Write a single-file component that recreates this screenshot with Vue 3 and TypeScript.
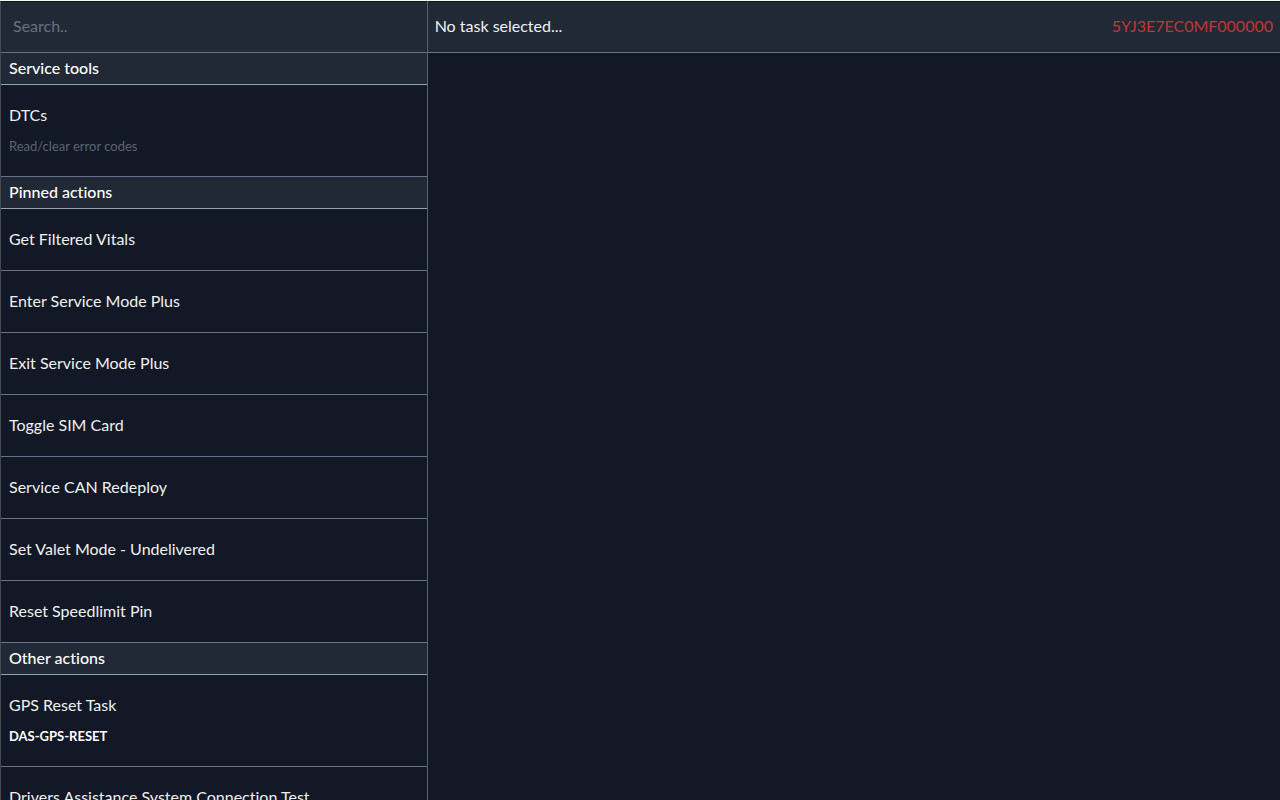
<script setup lang="ts">
import { ref, computed } from 'vue'

interface Task {
  name: string
  detail?: string
  code?: string
}

interface Group {
  title: string
  tasks: Task[]
}

const query = ref('')
const selected = ref<Task | null>(null)
const vin = '5YJ3E7EC0MF000000'

const groups: Group[] = [
  { title: 'Service tools', tasks: [{ name: 'DTCs', detail: 'Read/clear error codes' }] },
  {
    title: 'Pinned actions',
    tasks: [
      { name: 'Get Filtered Vitals' },
      { name: 'Enter Service Mode Plus' },
      { name: 'Exit Service Mode Plus' },
      { name: 'Toggle SIM Card' },
      { name: 'Service CAN Redeploy' },
      { name: 'Set Valet Mode - Undelivered' },
      { name: 'Reset Speedlimit Pin' },
    ],
  },
  {
    title: 'Other actions',
    tasks: [
      { name: 'GPS Reset Task', code: 'DAS-GPS-RESET' },
      { name: 'Drivers Assistance System Connection Test' },
    ],
  },
]

const visibleGroups = computed(() =>
  groups
    .map((g) => ({
      ...g,
      tasks: g.tasks.filter((t) => t.name.toLowerCase().includes(query.value.toLowerCase())),
    }))
    .filter((g) => g.tasks.length > 0),
)
</script>

<template>
  <div class="app">
    <aside class="sidebar">
      <input v-model="query" class="search" type="text" placeholder="Search.." aria-label="Search tasks" />
      <nav class="list">
        <section v-for="group in visibleGroups" :key="group.title">
          <h2 class="group-title">{{ group.title }}</h2>
          <button v-for="task in group.tasks" :key="task.name" class="task" type="button" @click="selected = task">
            <span class="name">{{ task.name }}</span>
            <span v-if="task.detail" class="detail">{{ task.detail }}</span>
            <span v-if="task.code" class="code">{{ task.code }}</span>
          </button>
        </section>
      </nav>
    </aside>
    <main class="panel">
      <header class="bar">
        <span>{{ selected ? selected.name : 'No task selected...' }}</span>
        <span class="vin">{{ vin }}</span>
      </header>
    </main>
  </div>
</template>

<style>
body {
  background: #121826;
}
</style>

<style scoped>
.app {
  display: grid;
  grid-template-columns: 1fr 2fr;
  grid-template-rows: minmax(0, 1fr);
  box-sizing: border-box;
  height: 100vh;
  overflow: hidden;
  border-top: 1px solid #f4f5f5;
  background: #121826;
  color: #f0f0ee;
  font-family: Lato, "Noto Sans", sans-serif;
  font-size: 16px;
  font-variant-ligatures: none;
  line-height: 24px;
}

.sidebar {
  display: flex;
  flex-direction: column;
  min-width: 0;
  min-height: 0;
  border-left: 1px solid #424a54;
}

.search,
.bar {
  flex: none;
  box-sizing: border-box;
  height: 52px;
  border: 0;
  border-top: 1px solid #10151c;
  border-bottom: 1px solid #64728d;
  background: #212936;
}

.search {
  width: 100%;
  padding: 0 12px 3px;
  border-radius: 0;
  outline: none;
  color: #f0f0ee;
  font: inherit;
}

.search::placeholder {
  color: #69717e;
  opacity: 1;
}

.list {
  flex: 1;
  min-height: 0;
  overflow-y: auto;
  scrollbar-width: none;
}

.group-title {
  box-sizing: border-box;
  height: 32px;
  margin: 0;
  padding: 3px 8px;
  border-bottom: 1px solid #95a1b4;
  background: #212936;
  color: #ffffff;
  font-size: 16px;
  font-weight: 500;
}

.task {
  display: flex;
  flex-direction: column;
  gap: 8px;
  width: 100%;
  padding: 18px 8px 19px;
  border: 0;
  border-bottom: 1px solid #65738e;
  background: transparent;
  color: inherit;
  font: inherit;
  font-variant-ligatures: none;
  text-align: left;
  cursor: pointer;
}

.detail,
.code {
  font-size: 13px;
  line-height: 22px;
}

.detail {
  color: #5c636f;
}

.code {
  color: #ffffff;
  font-weight: 700;
}

.panel {
  min-width: 0;
  border-left: 1px solid #56627a;
}

.bar {
  display: flex;
  align-items: center;
  justify-content: space-between;
  padding: 0 7px 2px;
}

.vin {
  color: #c23632;
}
</style>
